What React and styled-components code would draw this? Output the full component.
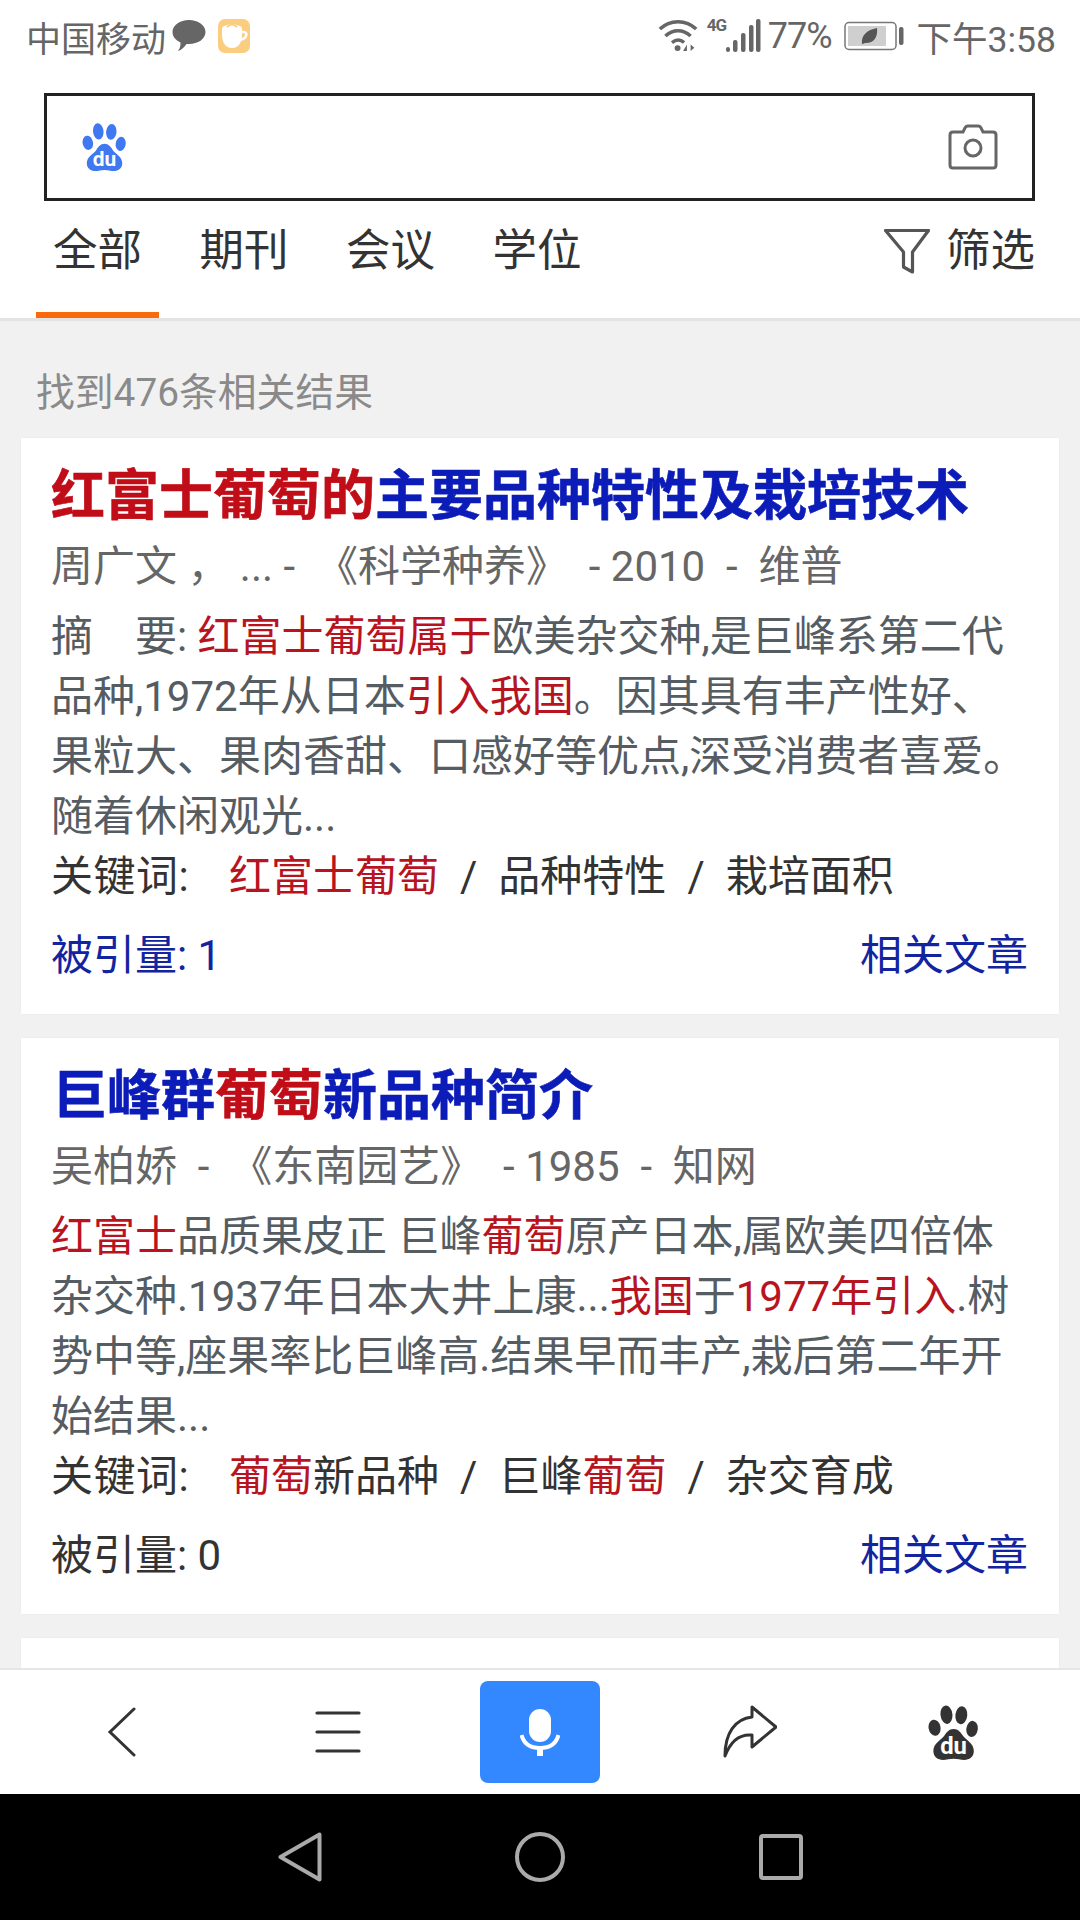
import React from "react";
import styled, { createGlobalStyle } from "styled-components";

const FONT = `Roboto, "Noto Sans CJK SC", sans-serif`;
const RED = "#c00d17";
const BLUE = "#0c1cb8";
const LINK = "#12249f";

const GlobalStyle = createGlobalStyle`
  html, body {
    margin: 0;
    padding: 0;
    background: #fff;
  }
  * {
    box-sizing: border-box;
  }
`;

const results = [
  {
    title: [["红富士葡萄的", true], ["主要品种特性及栽培技术", false]],
    titleIndent: 0,
    meta: "周广文 ， ... -  《科学种养》  - 2010  -  维普",
    abstract: [
      [["摘　要: ", false], ["红富士葡萄属于", true], ["欧美杂交种,是巨峰系第二代", false]],
      [["品种,1972年从日本", false], ["引入我国", true], ["。因其具有丰产性好、", false]],
      [["果粒大、果肉香甜、口感好等优点,深受消费者喜爱。", false]],
      [["随着休闲观光...", false]],
    ],
    keywords: [
      [["红富士葡萄", true]],
      [["品种特性", false]],
      [["栽培面积", false]],
    ],
    cited: "被引量: 1",
    citedLink: true,
  },
  {
    title: [["巨峰群", false], ["葡萄", true], ["新品种简介", false]],
    titleIndent: 2,
    meta: "吴柏娇  -  《东南园艺》  - 1985  -  知网",
    abstract: [
      [["红富士", true], ["品质果皮正 巨峰", false], ["葡萄", true], ["原产日本,属欧美四倍体", false]],
      [["杂交种.1937年日本大井上康...", false], ["我国", true], ["于", false], ["1977年引入", true], [".树", false]],
      [["势中等,座果率比巨峰高.结果早而丰产,栽后第二年开", false]],
      [["始结果...", false]],
    ],
    keywords: [
      [["葡萄", true], ["新品种", false]],
      [["巨峰", false], ["葡萄", true]],
      [["杂交育成", false]],
    ],
    cited: "被引量: 0",
    citedLink: false,
  },
];

function PawIcon({ color, holeColor, width, height }) {
  return (
    <svg width={width} height={height} viewBox="0 0 42 46">
      <ellipse cx="5.500" cy="19" rx="5" ry="6.800" fill={color} transform="rotate(-10 5.500 19)" />
      <ellipse cx="15.500" cy="8" rx="5" ry="7.800" fill={color} transform="rotate(-6 15.500 8)" />
      <ellipse cx="28" cy="8.500" rx="5" ry="7.600" fill={color} transform="rotate(6 28 8.500)" />
      <ellipse cx="37" cy="20" rx="4.800" ry="6.800" fill={color} transform="rotate(8 37 20)" />
      <path
        d="M21.500 20c4 0 6 3 8 6 2 3 9 6 9 12.500 0 5-4 7.500-8 7.500-3 0-6-1-9-1s-6 1-9 1c-4 0-8-2.500-8-7.500 0-6.500 7-9.500 9-12.500 2-3 4-6 8-6z"
        fill={color}
      />
      <DuText x="21.500" y="41" fill={holeColor}>
        du
      </DuText>
    </svg>
  );
}

function WifiIcon() {
  return (
    <svg width="41" height="36" viewBox="0 0 44 36">
      <g fill="none" stroke="#666" strokeWidth="3.800">
        <path d="M2 10.500C13 0 30 0 41 10.500" />
        <path d="M8 18C16 10.500 27 10.500 35 18" />
        <path d="M15 25c4.500-3.500 9-3.500 13 0" />
      </g>
      <circle cx="21" cy="31" r="3.200" fill="#666" />
      <path d="M31 34v-7l-4 7zM35 27v7l4-3.500z" fill="#666" />
    </svg>
  );
}

function SignalIcon() {
  return (
    <svg width="35" height="36" viewBox="0 0 35 36">
      <rect x="0" y="29" width="4" height="5" rx="2" fill="#666" />
      <rect x="7" y="22" width="4.500" height="12" rx="2" fill="#666" />
      <rect x="15" y="15" width="4.500" height="19" rx="2" fill="#666" />
      <rect x="23" y="7" width="4.500" height="27" rx="2" fill="#666" />
      <rect x="30" y="1" width="4.500" height="33" rx="2" fill="#666" />
    </svg>
  );
}

function BatteryIcon() {
  return (
    <svg width="60" height="30" viewBox="0 0 60 30">
      <rect x="1" y="1.500" width="51" height="27" rx="4" fill="#fff" stroke="#777" strokeWidth="1.500" />
      <rect x="4" y="5" width="38" height="20" fill="#cfcfcf" />
      <path d="M18 23c-1-9 5-14 15-16 1 9-3 15-11 15-1 0-2 .5-4 1z" fill="#555" />
      <rect x="55" y="6" width="4.500" height="18" rx="2" fill="#666" />
    </svg>
  );
}

function CoffeeBadge() {
  return (
    <svg width="32" height="34" viewBox="0 0 32 34">
      <rect x="0" y="0" width="32" height="34" rx="7" fill="#fbcd80" />
      <path d="M4 9c4-5 16-5 20 0v6c0 8-3 14-10 14S4 23 4 15z" fill="#fff" />
      <path d="M23 13h3c4 0 3 7-4 8" fill="none" stroke="#fff" strokeWidth="2.500" />
      <path d="M9 8c3-3 7-3 10 0" fill="none" stroke="#fbcd80" strokeWidth="2" />
    </svg>
  );
}

function BubbleIcon() {
  return (
    <svg width="34" height="34" viewBox="0 0 34 34">
      <path d="M17 1c9 0 16.500 5 16.500 12S26 25 17 25c-1 0-2 0-2.500-.1C12.500 28 9.500 31 6 32c2-2.500 2.500-5 2.500-8.500C3.500 21 .5 17.500.5 13 .5 6 8 1 17 1z" fill="#666" />
    </svg>
  );
}

function Highlighted({ parts }) {
  return parts.map(([text, hot], i) => (
    <Hot key={i} $hot={hot}>
      {text}
    </Hot>
  ));
}

function ResultCard({ item }) {
  return (
    <Card>
      <CardTitle $indent={item.titleIndent}>
        {item.title.map(([text, hot], i) => (
          <TitlePart key={i} $hot={hot}>
            {text}
          </TitlePart>
        ))}
      </CardTitle>
      <Meta>{item.meta}</Meta>
      <Abstract>
        {item.abstract.map((line, i) => (
          <AbstractLine key={i}>
            <Highlighted parts={line} />
          </AbstractLine>
        ))}
      </Abstract>
      <Keywords>
        <KeywordLabel>关键词:</KeywordLabel>
        {item.keywords.map((kw, i) => (
          <React.Fragment key={i}>
            {i > 0 && <KeywordSlash>/</KeywordSlash>}
            <span>
              <Highlighted parts={kw} />
            </span>
          </React.Fragment>
        ))}
      </Keywords>
      <CardFooter>
        <Cited $link={item.citedLink}>{item.cited}</Cited>
        <RelatedLink>相关文章</RelatedLink>
      </CardFooter>
    </Card>
  );
}

export default function App() {
  return (
    <Page>
      <GlobalStyle />
      <StatusBar>
        <CarrierGroup>
          <Carrier>中国移动</Carrier>
          <BubbleIcon />
          <CoffeeBadge />
        </CarrierGroup>
        <StatusIcons>
          <WifiIcon />
          <Network>
            <NetworkTag>4G</NetworkTag>
            <SignalIcon />
          </Network>
          <StatusText>77%</StatusText>
          <BatteryIcon />
          <StatusClock>下午3:58</StatusClock>
        </StatusIcons>
      </StatusBar>

      <SearchBox>
        <PawIcon color="#3f78f0" holeColor="#fff" width={44} height={48} />
        <svg width="50" height="46" viewBox="0 0 50 46" fill="none" stroke="#666" strokeWidth="3">
          <path d="M5 8h10l2-4c.6-1.500 1.500-2 3-2h10c1.500 0 2.400.5 3 2l2 4h10c2 0 3 1 3 3v30c0 2-1 3-3 3H5c-2 0-3-1-3-3V11c0-2 1-3 3-3z" />
          <circle cx="25" cy="24" r="8" />
        </svg>
      </SearchBox>

      <Tabs>
        <TabList>
          <Tab $active>全部</Tab>
          <Tab>期刊</Tab>
          <Tab>会议</Tab>
          <Tab>学位</Tab>
        </TabList>
        <FilterButton>
          <svg width="46" height="46" viewBox="0 0 46 46" fill="none" stroke="#555" strokeWidth="3.200" strokeLinejoin="round">
            <path d="M1.500 1.500h43L28.500 23v20l-9-5V23z" />
          </svg>
          筛选
        </FilterButton>
      </Tabs>

      <Content>
        <ResultCount>找到476条相关结果</ResultCount>
        {results.map((item, i) => (
          <ResultCard key={i} item={item} />
        ))}
        <Card />
      </Content>

      <BottomBar>
        <BarButton>
          <svg width="30" height="50" viewBox="0 0 30 50" fill="none" stroke="#333" strokeWidth="3" strokeLinecap="round">
            <path d="M27 2L3 25l24 23" />
          </svg>
        </BarButton>
        <BarButton>
          <svg width="46" height="44" viewBox="0 0 46 44" fill="none" stroke="#333" strokeWidth="3.200" strokeLinecap="round">
            <path d="M2 3h42M2 22h42M2 41h42" />
          </svg>
        </BarButton>
        <MicButton>
          <svg width="40" height="47" viewBox="0 0 40 47" fill="none" stroke="#fff">
            <rect x="9" y="0" width="22" height="33" rx="11" fill="#fff" stroke="none" />
            <path d="M1.500 26C4 35 11 39 20 39s16-4 18.500-13" strokeWidth="4" />
            <rect x="17" y="40" width="6" height="7" fill="#fff" stroke="none" />
          </svg>
        </MicButton>
        <BarButton>
          <svg width="54" height="54" viewBox="0 0 54 54" fill="none" stroke="#333" strokeWidth="3" strokeLinejoin="round">
            <path d="M29 2l24 20-24 20V30c-11-1-21 5-27 21C2 28 12 14 29 12z" />
          </svg>
        </BarButton>
        <BarButton>
          <PawIcon color="#333" holeColor="#fff" width={50} height={55} />
        </BarButton>
      </BottomBar>

      <NavBar>
        <svg width="44" height="50" viewBox="0 0 44 50" fill="none" stroke="#aaa" strokeWidth="4" strokeLinejoin="round">
          <path d="M41.500 2.500v45L2.500 25z" />
        </svg>
        <svg width="50" height="50" viewBox="0 0 50 50" fill="none" stroke="#aaa" strokeWidth="4">
          <circle cx="25" cy="25" r="23" />
        </svg>
        <svg width="44" height="46" viewBox="0 0 44 46" fill="none" stroke="#aaa" strokeWidth="4" strokeLinejoin="round">
          <rect x="2" y="2" width="40" height="42" rx="2" />
        </svg>
      </NavBar>
    </Page>
  );
}

const Page = styled.div`
  width: 1080px;
  height: 1920px;
  display: flex;
  flex-direction: column;
  overflow: hidden;
  background: #fff;
  font-family: ${FONT};
`;

const DuText = styled.text`
  font-family: ${FONT};
  font-size: 20px;
  font-weight: 700;
  text-anchor: middle;
`;

const StatusBar = styled.div`
  height: 75px;
  flex: none;
  padding: 0 24px 3px 26px;
  display: flex;
  align-items: center;
  justify-content: space-between;
`;

const CarrierGroup = styled.div`
  display: flex;
  align-items: center;
  gap: 6px;

  svg:last-child {
    margin-left: 6px;
  }
`;

const StatusIcons = styled.div`
  display: flex;
  align-items: center;
`;

const Carrier = styled.span`
  font-size: 35px;
  color: #666;
`;

const StatusText = styled.span`
  margin: 0 12px 0 7px;
  font-size: 36px;
  letter-spacing: -1px;
  color: #666;
`;

const StatusClock = styled.span`
  margin-left: 13px;
  font-size: 35.500px;
  color: #666;
`;

const Network = styled.div`
  display: flex;
  align-items: flex-end;
  margin-left: 8px;
`;

const NetworkTag = styled.span`
  width: 19px;
  align-self: flex-start;
  font-size: 17px;
  line-height: 15px;
  font-weight: 700;
  letter-spacing: -1px;
  color: #666;
`;

const SearchBox = styled.div`
  flex: none;
  width: 991px;
  height: 108px;
  margin: 18px 0 0 44px;
  padding: 0 34px 0 35px;
  border: 3px solid #222;
  display: flex;
  align-items: center;
  justify-content: space-between;
`;

const Tabs = styled.div`
  flex: none;
  height: 120px;
  padding: 0 45px 0 36px;
  border-bottom: 3px solid #e3e3e3;
  display: flex;
  justify-content: space-between;
`;

const TabList = styled.div`
  display: flex;
  gap: 23.500px;
`;

const Tab = styled.div`
  width: 123px;
  height: 117px;
  padding-top: 20px;
  text-align: center;
  font-size: 44.500px;
  line-height: 60px;
  color: #333;
  border-bottom: 6px solid ${(props) => (props.$active ? "#f96a0c" : "transparent")};
`;

const FilterButton = styled.div`
  display: flex;
  align-items: flex-start;
  gap: 16px;
  padding-top: 20px;
  font-size: 44.500px;
  line-height: 60px;
  color: #333;

  svg {
    margin-top: 8px;
  }
`;

const Content = styled.div`
  flex: 1;
  min-height: 0;
  overflow: hidden;
  background: #f1f1f1;
  padding: 0 21px;
`;

const ResultCount = styled.div`
  height: 117px;
  padding: 45px 0 0 15px;
  font-size: 38.800px;
  line-height: 54px;
  color: #8a8a8a;
`;

const Card = styled.div`
  height: 576px;
  margin-bottom: 24px;
  padding: 24px 31px 0 30px;
  background: #fff;
  box-shadow: 0 0 2px #e6e6e6;
`;

const CardTitle = styled.div`
  height: 70px;
  padding-left: ${(props) => props.$indent}px;
  font-size: 54px;
  line-height: 70px;
  font-weight: 700;
  white-space: nowrap;
  -webkit-text-stroke: 0.600px currentColor;
`;

const TitlePart = styled.span`
  color: ${(props) => (props.$hot ? RED : BLUE)};
`;

const Meta = styled.div`
  margin-top: 5px;
  font-size: 42px;
  line-height: 60px;
  color: #666;
  white-space: pre;
`;

const Abstract = styled.div`
  margin-top: 10px;
  font-size: 42px;
  line-height: 60px;
  color: #555c62;
`;

const AbstractLine = styled.div`
  white-space: pre;
`;

const Hot = styled.span`
  color: ${(props) => (props.$hot ? "#b8141f" : "inherit")};
`;

const Keywords = styled.div`
  height: 59px;
  display: flex;
  align-items: center;
  font-size: 42px;
  line-height: 59px;
  color: #333;
`;

const KeywordLabel = styled.span`
  width: 178px;
  flex: none;
  letter-spacing: 0.500px;
`;

const KeywordSlash = styled.span`
  margin: 0 21px;
`;

const CardFooter = styled.div`
  margin-top: 20px;
  display: flex;
  justify-content: space-between;
  font-size: 42px;
  line-height: 60px;
`;

const Cited = styled.span`
  color: ${(props) => (props.$link ? LINK : "#333")};
`;

const RelatedLink = styled.span`
  color: ${LINK};
`;

const BottomBar = styled.div`
  flex: none;
  height: 126px;
  border-top: 2px solid #e6e6e6;
  background: #fff;
  display: grid;
  grid-template-columns: 244px 188px 216px 204px 202px;
  align-items: center;
`;

const BarButton = styled.div`
  display: flex;
  justify-content: center;
  align-items: center;
`;

const MicButton = styled(BarButton)`
  width: 120px;
  height: 102px;
  justify-self: center;
  border-radius: 8px;
  background: #3388ff;
`;

const NavBar = styled.div`
  flex: none;
  height: 126px;
  background: #000;
  display: flex;
  align-items: center;
  padding-left: 278px;

  svg:nth-child(2) {
    margin-left: 193px;
  }
  svg:nth-child(3) {
    margin-left: 194px;
  }
`;
